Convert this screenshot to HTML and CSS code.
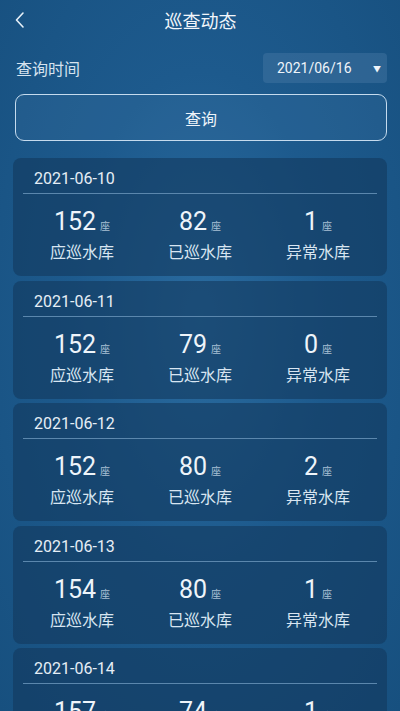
FILE: index.html
```html
<!DOCTYPE html>
<html lang="zh-CN">
<head>
    <meta charset="UTF-8">
    <meta name="viewport" content="width=device-width, initial-scale=1.0">
    <title>巡查动态</title>
    <link rel="stylesheet" href="styles.css">
</head>
<body>
    <div class="page">
        <div class="header">
            <svg class="back" width="12" height="18" viewBox="0 0 12 18">
                <path d="M9 2 L2.5 9 L9 16" fill="none" stroke="#e6f0f8" stroke-width="1.6" stroke-linecap="round" stroke-linejoin="round"/>
            </svg>
            <h1>巡查动态</h1>
        </div>

        <div class="filter">
            <span class="filter-label">查询时间</span>
            <div class="date-picker">
                <span>2021/06/16</span>
                <span class="caret">▼</span>
            </div>
        </div>

        <button class="query-btn">查询</button>

        <div class="day-list">
            <div class="day-card">
                <div class="day-date">2021-06-10</div>
                <div class="stats">
                    <div class="stat"><div class="num">152<small>座</small></div><div class="label">应巡水库</div></div>
                    <div class="stat"><div class="num">82<small>座</small></div><div class="label">已巡水库</div></div>
                    <div class="stat"><div class="num">1<small>座</small></div><div class="label">异常水库</div></div>
                </div>
            </div>
            <div class="day-card">
                <div class="day-date">2021-06-11</div>
                <div class="stats">
                    <div class="stat"><div class="num">152<small>座</small></div><div class="label">应巡水库</div></div>
                    <div class="stat"><div class="num">79<small>座</small></div><div class="label">已巡水库</div></div>
                    <div class="stat"><div class="num">0<small>座</small></div><div class="label">异常水库</div></div>
                </div>
            </div>
            <div class="day-card">
                <div class="day-date">2021-06-12</div>
                <div class="stats">
                    <div class="stat"><div class="num">152<small>座</small></div><div class="label">应巡水库</div></div>
                    <div class="stat"><div class="num">80<small>座</small></div><div class="label">已巡水库</div></div>
                    <div class="stat"><div class="num">2<small>座</small></div><div class="label">异常水库</div></div>
                </div>
            </div>
            <div class="day-card">
                <div class="day-date">2021-06-13</div>
                <div class="stats">
                    <div class="stat"><div class="num">154<small>座</small></div><div class="label">应巡水库</div></div>
                    <div class="stat"><div class="num">80<small>座</small></div><div class="label">已巡水库</div></div>
                    <div class="stat"><div class="num">1<small>座</small></div><div class="label">异常水库</div></div>
                </div>
            </div>
            <div class="day-card">
                <div class="day-date">2021-06-14</div>
                <div class="stats">
                    <div class="stat"><div class="num">157<small>座</small></div><div class="label">应巡水库</div></div>
                    <div class="stat"><div class="num">74<small>座</small></div><div class="label">已巡水库</div></div>
                    <div class="stat"><div class="num">1<small>座</small></div><div class="label">异常水库</div></div>
                </div>
            </div>
        </div>
    </div>
</body>
</html>
```

FILE: styles.css
```css
body {
    margin: 0;
    height: 711px;
    overflow: hidden;
    font-family: Roboto, "Noto Sans CJK SC", sans-serif;
    color: #e3edf6;
    background: radial-gradient(ellipse at 50% 45%, #2a6b9f 0%, #1d5a8d 45%, #17507f 100%);
}

.page {
    padding: 0 13px 0 14px;
}

.header {
    position: relative;
    height: 40px;
    display: flex;
    align-items: center;
    justify-content: center;
}

.header .back {
    position: absolute;
    left: 0;
    top: 11px;
}

.header h1 {
    margin: 0;
    font-size: 18px;
    font-weight: normal;
    color: #f1f6fb;
}

.filter {
    display: flex;
    justify-content: space-between;
    align-items: center;
    margin-top: 13px;
    padding-left: 2px;
}

.filter-label {
    font-size: 16px;
    color: #d6e3ef;
}

.date-picker {
    width: 124px;
    height: 30px;
    box-sizing: border-box;
    display: flex;
    align-items: center;
    justify-content: space-between;
    padding: 0 6px 0 14px;
    background: rgba(70, 120, 165, 0.45);
    border-radius: 4px;
    font-size: 14px;
    color: #eef4fa;
}

.date-picker .caret {
    font-size: 8px;
}

.query-btn {
    display: block;
    width: 372px;
    height: 47px;
    margin: 11px 0 0 1px;
    border: 1.5px solid #c5dbee;
    border-radius: 9px;
    background: rgba(60, 115, 165, 0.25);
    color: #eef4fa;
    font-family: inherit;
    font-size: 16px;
}

.day-list {
    margin-top: 17px;
    margin-left: -1px;
    display: flex;
    flex-direction: column;
    gap: 4.5px;
}

.day-card {
    height: 118px;
    box-sizing: border-box;
    padding: 0 10px;
    background: rgba(18, 56, 94, 0.6);
    border-radius: 8px;
}

.day-date {
    height: 36px;
    box-sizing: border-box;
    padding: 11px 0 0 11px;
    font-size: 16px;
    color: #e6eef6;
    border-bottom: 1.5px solid #5b87ad;
}

.stats {
    display: grid;
    grid-template-columns: 1fr 1fr 1fr;
    padding-top: 13px;
}

.stat {
    text-align: center;
}

.num {
    font-size: 25px;
    line-height: 30px;
    color: #eef4fa;
}

.num small {
    font-size: 10px;
    margin-left: 4px;
    color: #a9c0d4;
}

.label {
    font-size: 16px;
    line-height: 21px;
    color: #d8e5f1;
}
```
